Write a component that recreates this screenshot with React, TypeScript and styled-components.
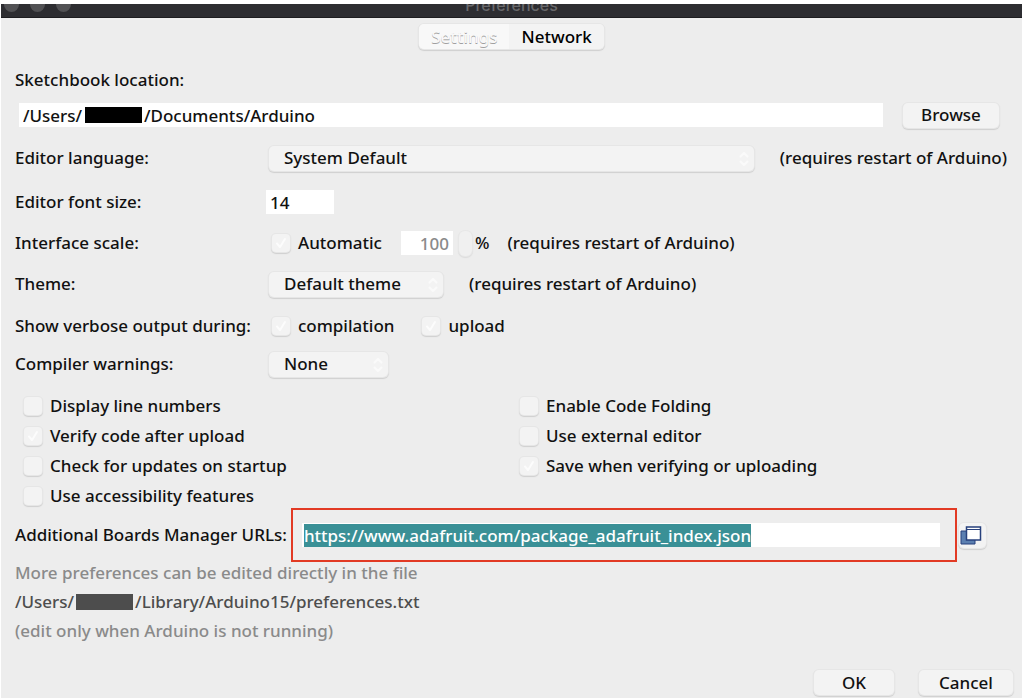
import React, { useEffect, useRef } from "react";
import styled, { createGlobalStyle, css } from "styled-components";

const GlobalStyle = createGlobalStyle`
  * { box-sizing: border-box; }
  body {
    margin: 0;
    background: #fff;
    color: #111;
    font-family: "Noto Sans", "Open Sans", sans-serif;
    font-size: 17px;
    font-weight: 500;
    line-height: 22px;
  }
  input, select, button { font: inherit; color: inherit; margin: 0; }
`;

const raised = css`
  border: 0;
  background: #f3f3f3;
  box-shadow: 0 0 0 1px #e6e6e6, 0 1px 1px 1px #cfcfcf;
`;

const Window = styled.form`
  margin: 4px 2px 2px 1px;
  background: #ededed;
`;

const TitleBar = styled.header`
  position: relative;
  display: flex;
  justify-content: center;
  align-items: flex-end;
  height: 14px;
  padding-bottom: 2px;
  overflow: hidden;
  background: #2d2d31;
  border-bottom: 1px solid #1d1d20;
`;

const Title = styled.h1`
  margin: 0;
  font: 500 16px/20px Inter, sans-serif;
  color: #68686b;
`;

const Lights = styled.div`
  position: absolute;
  left: 3px;
  bottom: 5px;
  display: flex;
  gap: 11px;
`;

const Light = styled.span`
  width: 15px;
  height: 15px;
  border-radius: 50%;
  background: #515154;
`;

const Tabs = styled.div`
  display: flex;
  width: max-content;
  margin: 6px auto 0;
  border-radius: 5px;
  overflow: hidden;
  ${raised}
`;

const Tab = styled.button<{ $active?: boolean }>`
  height: 25px;
  padding: 0 12px;
  border: 0;
  color: ${(p) => (p.$active ? "#f8f8f8" : "#000")};
  background: ${(p) => (p.$active ? "#f8f8f8" : "#f3f3f3")};
  text-shadow: ${(p) => (p.$active ? "0 1px 0 #a0a0a0" : "none")};
`;

const Body = styled.main`
  display: flex;
  flex-direction: column;
  padding: 18px 15px 0 14px;
`;

const Row = styled.div<{ $top?: number; $gap?: number }>`
  display: flex;
  align-items: center;
  min-height: 26px;
  margin-top: ${(p) => p.$top ?? 0}px;
  gap: ${(p) => p.$gap ?? 0}px;
  white-space: nowrap;
`;

const PathRow = styled(Row)`
  padding: 0 8px 0 4px;
`;

const Label = styled.label`
  flex: none;
  width: 251px;
`;

const Controls = styled.div<{ $inset: number; $gap?: number }>`
  display: flex;
  flex: 1;
  align-items: center;
  gap: ${(p) => p.$gap ?? 0}px;
  padding-left: ${(p) => p.$inset}px;
`;

const TextField = styled.input<{ $width?: number; $right?: boolean }>`
  width: ${(p) => (p.$width ? p.$width + "px" : "100%")};
  height: 24px;
  padding: 0 4px;
  border: 0;
  outline: 0;
  background: #fff;
  text-align: ${(p) => (p.$right ? "right" : "left")};
  &:disabled { color: #8a8a8a; }
  &::selection { background: #3a9096; color: #fff; }
`;

const PathBox = styled.div`
  position: relative;
  display: flex;
  flex: 1;
`;

const Redaction = styled.span`
  display: inline-block;
  width: 57px;
  height: 16px;
  margin: 0 2px;
  vertical-align: -2px;
  background: #4d4d4d;
`;

const FieldRedaction = styled(Redaction)`
  position: absolute;
  left: 64px;
  top: 4px;
  background: #000;
`;

const PushButton = styled.button<{ $width: number }>`
  width: ${(p) => p.$width}px;
  height: 25px;
  padding: 0;
  border-radius: 5px;
  ${raised}
`;

const IconButton = styled.button`
  display: grid;
  place-items: center;
  width: 27px;
  height: 25px;
  padding: 0 3px 0 0;
  border-radius: 5px;
  ${raised}
`;

const SelectBox = styled.div<{ $width?: number }>`
  position: relative;
  display: flex;
  flex: ${(p) => (p.$width ? "none" : "1")};
  width: ${(p) => (p.$width ? p.$width + "px" : "auto")};
  svg {
    position: absolute;
    right: 4px;
    top: 4px;
    pointer-events: none;
  }
`;

const Select = styled.select`
  appearance: none;
  width: 100%;
  height: 25px;
  padding: 0 24px 0 15px;
  border-radius: 5px;
  ${raised}
`;

const CheckLabel = styled.label`
  display: flex;
  align-items: center;
  gap: 8px;
`;

const CheckMark = styled.span`
  display: grid;
  width: 18px;
  height: 18px;
  > * { grid-area: 1 / 1; }
  svg { pointer-events: none; }
  input:not(:checked) + svg { visibility: hidden; }
`;

const CheckInput = styled.input`
  appearance: none;
  width: 18px;
  height: 18px;
  border-radius: 4px;
  ${raised}
`;

const Scale = styled.div`
  display: flex;
  align-items: center;
  gap: 6px;
  margin-left: 19px;
`;

const Stepper = styled.button`
  width: 13px;
  height: 25px;
  margin-right: -3px;
  padding: 0;
  border-radius: 6px;
  border: 0;
  background: #f0f0f0;
  box-shadow: 0 0 0 1px #e7e7e7, 0 1px 1px 1px #dcdcdc;
`;

const Hint = styled.span<{ $left?: number }>`
  margin-left: ${(p) => p.$left ?? 0}px;
`;

const Options = styled.div`
  display: grid;
  grid-template-columns: 1fr 1fr;
  margin: 17px -9px 0 9px;
`;

const OptionList = styled.div`
  display: flex;
  flex-direction: column;
  gap: 6px;
  label { height: 24px; }
`;

const UrlRow = styled.div`
  display: flex;
  align-items: center;
  padding-right: 21px;
  white-space: nowrap;
`;

const Highlight = styled.div`
  flex: 1;
  margin: 0 2px 0 4px;
  padding: 13px 15px 13px 9px;
  border: 2px solid #e23a24;
`;

const UrlField = styled(TextField)`
  display: block;
  padding: 0 2px;
`;

const Notes = styled.div`
  display: flex;
  flex-direction: column;
  gap: 7px;
  color: #8a8a8a;
  p { margin: 0; }
`;

const FilePath = styled.p`
  color: #4d4d4d;
`;

const Footer = styled.footer`
  display: flex;
  justify-content: flex-end;
  gap: 25px;
  padding: 28px 9px 3px;
`;

const Arrows = () => (
  <svg width="12" height="18" viewBox="0 0 12 18" fill="none" stroke="#fafafa" strokeWidth="2" strokeLinecap="round" strokeLinejoin="round" aria-hidden="true">
    <path d="M2.5 6.5 6 3l3.5 3.5M2.5 11.5 6 15l3.5-3.5" />
  </svg>
);

const Check = ({ text, checked }: { text: string; checked?: boolean }) => (
  <CheckLabel>
    <CheckMark>
      <CheckInput type="checkbox" defaultChecked={checked} />
      <svg width="18" height="18" viewBox="0 0 18 18" fill="none" stroke="#fcfcfc" strokeWidth="2" strokeLinecap="round" strokeLinejoin="round" aria-hidden="true">
        <path d="m5 9.5 3 3.5 5-8" />
      </svg>
    </CheckMark>
    {text}
  </CheckLabel>
);

const Dropdown = ({ id, value, width }: { id: string; value: string; width?: number }) => (
  <SelectBox $width={width}>
    <Select id={id} defaultValue={value}>
      <option>{value}</option>
    </Select>
    <Arrows />
  </SelectBox>
);

const RESTART = "(requires restart of Arduino)";
const HIDDEN_NAME = "\u00a0".repeat(14);

export default function App() {
  const urlRef = useRef<HTMLInputElement>(null);

  useEffect(() => {
    urlRef.current?.focus();
    urlRef.current?.select();
  }, []);

  return (
    <>
      <GlobalStyle />
      <Window onSubmit={(e) => e.preventDefault()}>
        <TitleBar>
          <Lights>
            <Light />
            <Light />
            <Light />
          </Lights>
          <Title>Preferences</Title>
        </TitleBar>
        <Tabs role="tablist">
          <Tab type="button" role="tab" aria-selected="true" $active>Settings</Tab>
          <Tab type="button" role="tab" aria-selected="false">Network</Tab>
        </Tabs>
        <Body>
          <Row>
            <Label htmlFor="sketchbook">Sketchbook location:</Label>
          </Row>
          <PathRow $top={9} $gap={20}>
            <PathBox>
              <TextField id="sketchbook" defaultValue={`/Users/${HIDDEN_NAME}/Documents/Arduino`} />
              <FieldRedaction />
            </PathBox>
            <PushButton type="button" $width={96}>Browse</PushButton>
          </PathRow>
          <Row $top={17}>
            <Label htmlFor="language">Editor language:</Label>
            <Controls $inset={3} $gap={26}>
              <Dropdown id="language" value="System Default" />
              <Hint>{RESTART}</Hint>
            </Controls>
          </Row>
          <Row $top={18}>
            <Label htmlFor="fontsize">Editor font size:</Label>
            <Controls $inset={0}>
              <TextField id="fontsize" defaultValue="14" $width={68} />
            </Controls>
          </Row>
          <Row $top={15}>
            <Label htmlFor="scale">Interface scale:</Label>
            <Controls $inset={6}>
              <Check text="Automatic" checked />
              <Scale>
                <TextField id="scale" defaultValue="100" disabled $width={52} $right />
                <Stepper type="button" aria-label="Change scale" />
                <span>%</span>
              </Scale>
              <Hint $left={18}>{RESTART}</Hint>
            </Controls>
          </Row>
          <Row $top={15}>
            <Label htmlFor="theme">Theme:</Label>
            <Controls $inset={3} $gap={26}>
              <Dropdown id="theme" value="Default theme" width={174} />
              <Hint>{RESTART}</Hint>
            </Controls>
          </Row>
          <Row $top={16}>
            <Label as="span">Show verbose output during:</Label>
            <Controls $inset={6} $gap={28}>
              <Check text="compilation" checked />
              <Check text="upload" checked />
            </Controls>
          </Row>
          <Row $top={12}>
            <Label htmlFor="warnings">Compiler warnings:</Label>
            <Controls $inset={3}>
              <Dropdown id="warnings" value="None" width={119} />
            </Controls>
          </Row>
          <Options>
            <OptionList>
              <Check text="Display line numbers" />
              <Check text="Verify code after upload" checked />
              <Check text="Check for updates on startup" />
              <Check text="Use accessibility features" />
            </OptionList>
            <OptionList>
              <Check text="Enable Code Folding" />
              <Check text="Use external editor" />
              <Check text="Save when verifying or uploading" checked />
            </OptionList>
          </Options>
          <UrlRow>
            <label htmlFor="urls">Additional Boards Manager URLs:</label>
            <Highlight>
              <UrlField id="urls" ref={urlRef} defaultValue="https://www.adafruit.com/package_adafruit_index.json" />
            </Highlight>
            <IconButton type="button" aria-label="Edit URLs">
              <svg width="22" height="19" viewBox="0 0 22 19" aria-hidden="true">
                <path d="M1 5h14v13H1z" fill="#5b7fb0" stroke="#27407c" />
                <path d="M6.5 1h14v13h-14z" fill="#fff" stroke="#27407c" strokeWidth="1.5" />
                <path d="M7 3.5h13" stroke="#27407c" />
              </svg>
            </IconButton>
          </UrlRow>
          <Notes>
            <p>More preferences can be edited directly in the file</p>
            <FilePath>/Users/<Redaction />/Library/Arduino15/preferences.txt</FilePath>
            <p>(edit only when Arduino is not running)</p>
          </Notes>
        </Body>
        <Footer>
          <PushButton type="submit" $width={80}>OK</PushButton>
          <PushButton type="button" $width={94}>Cancel</PushButton>
        </Footer>
      </Window>
    </>
  );
}
